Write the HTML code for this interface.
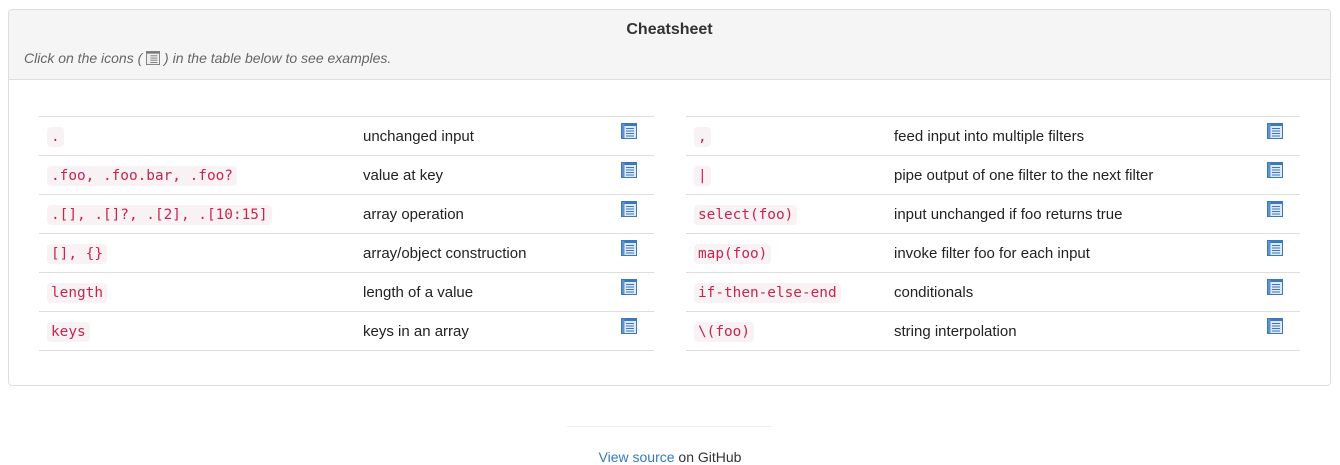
<!DOCTYPE html>
<html><head><style>
body{margin:0;background:#fff;font-family:"Liberation Sans",Helvetica,Arial,sans-serif;font-size:14px;color:#333;width:1340px;height:464px;overflow:hidden;position:relative}
.panel{position:absolute;left:8px;top:9px;width:1321px;height:375px;border:1px solid #ddd;border-radius:4px;overflow:hidden}
.head{background:#f5f5f5;border-bottom:1px solid #ddd;height:69px}
.head h3{margin:0;text-align:center;font-size:16px;font-weight:bold;padding-top:12px;height:26px;line-height:16px}
.head p{margin:0;padding-left:15px;font-style:italic;color:#666;font-size:14px;line-height:20px}
table{position:absolute;top:106px;border-collapse:collapse}
td{border-top:1px solid #ddd;height:37px;padding:1px 8px 0;vertical-align:middle;font-size:15px;color:#222}
tr:last-child td{border-bottom:1px solid #ddd}
code{font-family:"DejaVu Sans Mono","Liberation Mono",monospace;font-size:14.4px;color:#c7254e;background:#f9f2f4;border-radius:4px;padding:2px 4px}
svg.ic{width:16px;height:16px;position:relative;top:-6px;left:1px;vertical-align:middle}
.foot{position:absolute;top:426px;left:567px;width:205px;border-top:1px solid #eee}
.src{position:absolute;top:449px;width:1340px;text-align:center;font-size:14px}
.src a{color:#337ab7;text-decoration:none}
</style></head><body>
<svg width="0" height="0" style="position:absolute"><defs><symbol id="i" viewBox="0 0 16 16"><rect x="0.5" y="0.5" width="15" height="15" fill="#dfe9f5" stroke="#3a78c0"/><rect x="1" y="1" width="14" height="2" fill="#3a78c0"/><rect x="1" y="1" width="2.5" height="14" fill="#5d92cf"/><path d="M5 5.5h8M5 8h8M5 10.5h8M5 13h8" stroke="#3a78c0" stroke-width="1"/></symbol></defs></svg>
<div class="panel">
<div class="head"><h3>Cheatsheet</h3><p>Click on the icons ( <svg style="width:14px;height:14px;vertical-align:-2px" viewBox="0 0 16 16"><rect x="0.5" y="0.5" width="15" height="15" fill="#eee" stroke="#777"/><rect x="1" y="1" width="14" height="2" fill="#777"/><path d="M5 5.5h8M5 8h8M5 10.5h8M5 13h8" stroke="#777"/></svg> ) in the table below to see examples.</p></div>
<table style="left:30px;width:615px">
<tr><td style="width:300px"><code>.</code></td><td>unchanged input</td><td style="width:26px"><svg class="ic"><use href="#i"/></svg></td></tr>
<tr><td><code>.foo, .foo.bar, .foo?</code></td><td>value at key</td><td><svg class="ic"><use href="#i"/></svg></td></tr>
<tr><td><code>.[], .[]?, .[2], .[10:15]</code></td><td>array operation</td><td><svg class="ic"><use href="#i"/></svg></td></tr>
<tr><td><code>[], {}</code></td><td>array/object construction</td><td><svg class="ic"><use href="#i"/></svg></td></tr>
<tr><td><code>length</code></td><td>length of a value</td><td><svg class="ic"><use href="#i"/></svg></td></tr>
<tr><td><code>keys</code></td><td>keys in an array</td><td><svg class="ic"><use href="#i"/></svg></td></tr>
</table>
<table style="left:677px;width:614px">
<tr><td style="width:184px"><code>,</code></td><td>feed input into multiple filters</td><td style="width:26px"><svg class="ic"><use href="#i"/></svg></td></tr>
<tr><td><code>|</code></td><td>pipe output of one filter to the next filter</td><td><svg class="ic"><use href="#i"/></svg></td></tr>
<tr><td><code>select(foo)</code></td><td>input unchanged if foo returns true</td><td><svg class="ic"><use href="#i"/></svg></td></tr>
<tr><td><code>map(foo)</code></td><td>invoke filter foo for each input</td><td><svg class="ic"><use href="#i"/></svg></td></tr>
<tr><td><code>if-then-else-end</code></td><td>conditionals</td><td><svg class="ic"><use href="#i"/></svg></td></tr>
<tr><td><code>\(foo)</code></td><td>string interpolation</td><td><svg class="ic"><use href="#i"/></svg></td></tr>
</table>
</div>
<div class="foot"></div>
<div class="src"><a>View source</a> on GitHub</div>
</body></html>
